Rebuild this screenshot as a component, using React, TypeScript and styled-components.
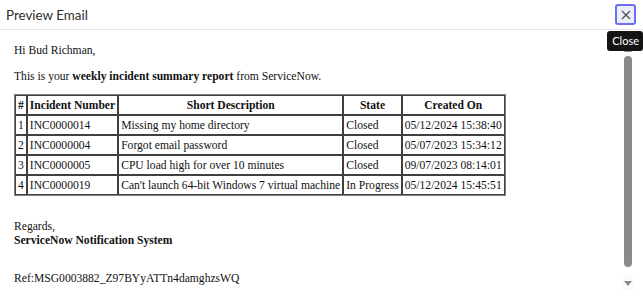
import styled, { createGlobalStyle } from 'styled-components';

const Global = createGlobalStyle`
  html, body {
    margin: 0;
    padding: 0;
    background: #ffffff;
    overflow: hidden;
  }
`;

interface Incident {
  num: number;
  id: string;
  desc: string;
  state: string;
  created: string;
}

const incidents: Incident[] = [
  { num: 1, id: 'INC0000014', desc: 'Missing my home directory', state: 'Closed', created: '05/12/2024 15:38:40' },
  { num: 2, id: 'INC0000004', desc: 'Forgot email password', state: 'Closed', created: '05/07/2023 15:34:12' },
  { num: 3, id: 'INC0000005', desc: 'CPU load high for over 10 minutes', state: 'Closed', created: '09/07/2023 08:14:01' },
  { num: 4, id: 'INC0000019', desc: "Can't launch 64-bit Windows 7 virtual machine", state: 'In Progress', created: '05/12/2024 15:45:51' },
];

const serif = "'Liberation Serif', 'Times New Roman', serif";

const Modal = styled.div`
  position: relative;
  width: 643px;
  height: 298px;
  display: flex;
  flex-direction: column;
  background: #fff;
`;

const Header = styled.div`
  height: 29px;
  flex-shrink: 0;
  display: flex;
  align-items: center;
  justify-content: space-between;
  padding: 0 7px 0 6px;
  border-bottom: 1px solid #e4e4e4;
`;

const Title = styled.h1`
  margin: 0;
  font-family: Lato, 'Open Sans', sans-serif;
  font-size: 13.4px;
  font-weight: 400;
  color: #2e2e2e;
`;

const CloseButton = styled.button`
  width: 21px;
  height: 21px;
  padding: 0;
  display: flex;
  align-items: center;
  justify-content: center;
  border: 2px solid #6a70ee;
  border-radius: 3px;
  background: #eceefb;
  cursor: pointer;
`;

const Tooltip = styled.div`
  position: absolute;
  top: 31px;
  right: 0;
  z-index: 2;
  padding: 3px 4px 4px 5px;
  background: #141414;
  color: #fff;
  border-radius: 3px;
  font-family: Lato, 'Open Sans', sans-serif;
  font-size: 11px;
  line-height: 13px;
  white-space: nowrap;
`;

const Body = styled.div`
  flex: 1;
  min-height: 0;
  overflow: hidden;
  margin-right: 21px;
`;

/* scrollbar of the body, drawn over its right edge */
const Scrollbar = styled.div`
  position: absolute;
  top: 42px;
  right: 10px;
  width: 10px;
  height: 248px;
  display: flex;
  flex-direction: column;
  align-items: center;
`;

const ScrollArrow = styled.div<{ $down?: boolean }>`
  height: 14px;
  width: 10px;
  flex-shrink: 0;
  display: flex;
  align-items: center;
  justify-content: center;
  background: #fafafa;

  &::after {
    content: '';
    width: 0;
    height: 0;
    border-left: 4px solid transparent;
    border-right: 4px solid transparent;
    ${(p) => (p.$down ? 'border-top: 5px solid #8a8a8a;' : 'border-bottom: 5px solid #8a8a8a;')}
  }
`;

const ScrollTrack = styled.div`
  flex: 1;
  width: 100%;
  display: flex;
  justify-content: center;
`;

const ScrollThumb = styled.div`
  width: 8px;
  height: 211px;
  background: #8a8a8a;
  border-radius: 4px;
`;

const Email = styled.div`
  padding: 0 14px 34px 14px;
  font-family: ${serif};
  font-size: 11.6px;
  line-height: 15px;
  color: #111;

  b {
    font-weight: 700;
  }
`;

const Line = styled.p<{ $top: number }>`
  margin: ${(p) => p.$top}px 0 0 0;
`;

const Closing = styled.p`
  margin: 24px 0 0 0;
  line-height: 13.5px;
`;

const Table = styled.table`
  margin-top: 10px;
  border-collapse: separate;
  border-spacing: 0;
  border: 1px solid #808080;
  font-family: ${serif};
  font-size: 11.6px;
  color: #111;
`;

const HeadCell = styled.th`
  border: 1px solid #404040;
  padding: 2px 2px 1px 2px;
  font-weight: 700;
  text-align: center;
  line-height: 15px;
`;

const Cell = styled.td`
  border: 1px solid #404040;
  padding: 2px 2px 1px 2px;
  line-height: 15px;
  white-space: nowrap;
`;

function IncidentTable({ rows }: { rows: Incident[] }) {
  return (
    <Table>
      <thead>
        <tr>
          <HeadCell>#</HeadCell>
          <HeadCell>Incident Number</HeadCell>
          <HeadCell>Short Description</HeadCell>
          <HeadCell>State</HeadCell>
          <HeadCell>Created On</HeadCell>
        </tr>
      </thead>
      <tbody>
        {rows.map((r) => (
          <tr key={r.id}>
            <Cell>{r.num}</Cell>
            <Cell>{r.id}</Cell>
            <Cell>{r.desc}</Cell>
            <Cell>{r.state}</Cell>
            <Cell>{r.created}</Cell>
          </tr>
        ))}
      </tbody>
    </Table>
  );
}

export default function App() {
  return (
    <>
      <Global />
      <Modal>
        <Header>
          <Title>Preview Email</Title>
          <CloseButton aria-label="Close">
            <svg width="10" height="10" viewBox="0 0 10 10">
              <path d="M1 1 L9 9 M9 1 L1 9" stroke="#4a4a4a" strokeWidth="1.1" fill="none" />
            </svg>
          </CloseButton>
        </Header>
        <Tooltip>Close</Tooltip>
        <Body>
          <Email>
            <Line $top={13}>Hi Bud Richman,</Line>
            <Line $top={11}>
              This is your <b>weekly incident summary report</b> from ServiceNow.
            </Line>
            <IncidentTable rows={incidents} />
            <Closing>
              Regards,
              <br />
              <b>ServiceNow Notification System</b>
            </Closing>
            <Line $top={24}>Ref:MSG0003882_Z97BYyATTn4damghzsWQ</Line>
          </Email>
        </Body>
        <Scrollbar>
          <ScrollArrow />
          <ScrollTrack>
            <ScrollThumb />
          </ScrollTrack>
          <ScrollArrow $down />
        </Scrollbar>
      </Modal>
    </>
  );
}
